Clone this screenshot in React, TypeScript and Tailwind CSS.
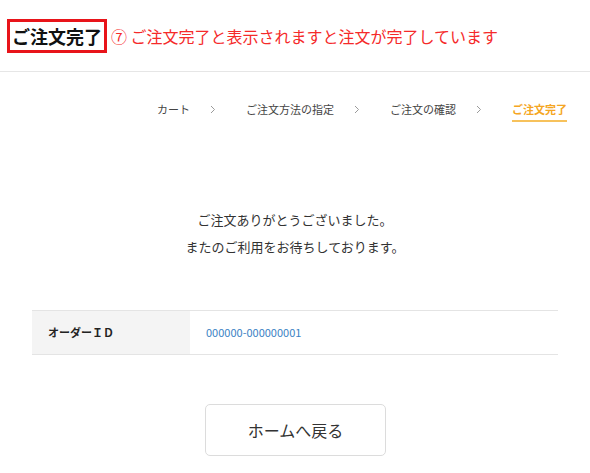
import React from 'react';

const font = { fontFamily: '"Noto Sans CJK JP", "Noto Sans", sans-serif' };

type Step = { label: string; active?: boolean };

const steps: Step[] = [
  { label: 'カート' },
  { label: 'ご注文方法の指定' },
  { label: 'ご注文の確認' },
  { label: 'ご注文完了', active: true },
];

function Chevron() {
  return (
    <svg width="6" height="9" viewBox="0 0 6 9" className="ml-[20px] mr-[30px]" fill="none">
      <path d="M1 1l3.5 3.5L1 8" stroke="#9a9a9a" strokeWidth="1" />
    </svg>
  );
}

export default function App() {
  return (
    <div className="w-[590px] h-[473px] bg-white overflow-hidden text-[#333]" style={font}>
      {/* header */}
      <div className="h-[72px] flex items-center pl-[7px] border-b border-[#e6e6e6]">
        <div className="border-[3px] border-[#e8141a] h-[34px] px-[2px] flex items-center">
          <span className="text-[18px] font-bold text-[#111] leading-none">ご注文完了</span>
        </div>
        <span className="ml-[4px] text-[16px] text-[#f52a2a] leading-none">⑦ ご注文完了と表示されますと注文が完了しています</span>
      </div>

      {/* steps */}
      <div className="flex justify-end items-start pr-[23px] mt-[28px] text-[11px] leading-[18px]">
        {steps.map((s, i) => (
          <React.Fragment key={s.label}>
            {i > 0 && (
              <div className="h-[18px] flex items-center">
                <Chevron />
              </div>
            )}
            <div
              className={
                s.active
                  ? 'text-[#f5a623] font-bold border-b-2 border-[#f7c25c] pb-[2px]'
                  : 'text-[#444]'
              }
            >
              {s.label}
            </div>
          </React.Fragment>
        ))}
      </div>

      {/* message */}
      <div className="mt-[84px] flex flex-col items-center text-[13px] leading-[27px] text-[#333]">
        <p>ご注文ありがとうございました。</p>
        <p>またのご利用をお待ちしております。</p>
      </div>

      {/* order table */}
      <div className="mx-[32px] mt-[50px] flex border-y border-[#e4e4e4] h-[45px] text-[11px]">
        <div className="w-[158px] bg-[#f4f4f4] flex items-center pl-[16px] font-bold text-[#222]">
          オーダーＩＤ
        </div>
        <div className="flex items-center pl-[16px] text-[#3b82c4]">000000-000000001</div>
      </div>

      {/* button */}
      <div className="flex justify-center mt-[49px]">
        <button className="w-[181px] h-[52px] ml-[1px] border border-[#dcdcdc] rounded-[5px] bg-white text-[16px] text-[#333]">
          ホームへ戻る
        </button>
      </div>
    </div>
  );
}
